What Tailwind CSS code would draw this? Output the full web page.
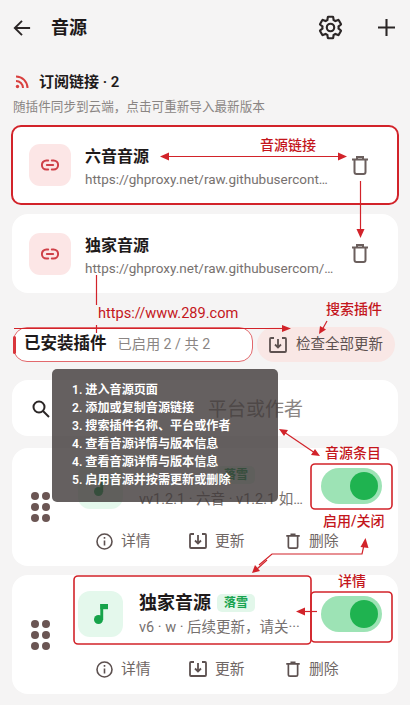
<!DOCTYPE html>
<html lang="zh">
<head>
<meta charset="utf-8">
<script src="https://cdn.jsdelivr.net/npm/@tailwindcss/browser@4"></script>
</head>
<body>
<div class="relative w-[410px] h-[705px] overflow-hidden bg-[#f5f4f4] font-['Roboto','Noto_Sans_CJK_SC',sans-serif] text-[#1e1a1a]">

  <header class="flex items-center h-[55px] pl-[13px] pr-[15px]">
    <svg class="w-[18px] h-[18px]" viewBox="0 0 20 20" fill="none" stroke="#2b2626" stroke-width="2.100"><path d="M19 10H2M10 2l-8 8 8 8"/></svg>
    <h1 class="ml-[20px] text-[18px] font-semibold leading-none">音源</h1>
    <svg class="ml-auto w-[27px] h-[27px]" viewBox="0 0 24 24" fill="none" stroke="#2b2626" stroke-width="1.900"><path d="M19.14 12.94c.04-.3.06-.61.06-.94 0-.32-.02-.64-.07-.94l2.03-1.58c.18-.14.23-.41.12-.61l-1.92-3.32c-.12-.22-.37-.29-.59-.22l-2.39.96c-.5-.38-1.03-.7-1.62-.94l-.36-2.54c-.04-.24-.24-.41-.48-.41h-3.84c-.24 0-.43.17-.47.41l-.36 2.54c-.59.24-1.13.57-1.62.94l-2.39-.96c-.22-.08-.47 0-.59.22L2.74 8.87c-.12.21-.08.47.12.61l2.03 1.58c-.05.3-.09.63-.09.94s.02.64.07.94l-2.03 1.58c-.18.14-.23.41-.12.61l1.92 3.32c.12.22.37.29.59.22l2.39-.96c.5.38 1.03.7 1.62.94l.36 2.54c.05.24.24.41.48.41h3.84c.24 0 .44-.17.47-.41l.36-2.54c.59-.24 1.13-.56 1.62-.94l2.39.96c.22.08.47 0 .59-.22l1.92-3.32c.12-.22.07-.47-.12-.61l-2.01-1.58z"/><circle cx="12" cy="12" r="3.300"/></svg>
    <svg class="ml-[34px] w-[17px] h-[17px]" viewBox="0 0 18 18" fill="none" stroke="#2b2626" stroke-width="2.200"><path d="M9 0v18M0 9h18"/></svg>
  </header>

  <section class="mt-[15px] pl-[15px] flex items-center h-[24px]">
    <svg class="w-[14px] h-[14px]" viewBox="0 0 14 14" fill="none" stroke="#d9403f" stroke-width="2"><path d="M1 6a7 7 0 0 1 7 7M1 1.500A11.500 11.500 0 0 1 12.500 13"/><circle cx="2.500" cy="11.500" r="1.700" fill="#d9403f" stroke="none"/></svg>
    <h2 class="ml-[10px] text-[15px] font-semibold leading-none">订阅链接 · 2</h2>
  </section>
  <p class="mt-[4px] ml-[13px] text-[12.600px] leading-[18px] text-[#8a8583]">随插件同步到云端，点击可重新导入最新版本</p>

  <div class="mt-[9px] mx-[11px] h-[80px] flex items-center pl-[16px] pr-[29px] bg-white rounded-[10px] border-2 border-[#d2232a]">
    <div class="w-[42px] h-[42px] shrink-0 rounded-[11px] bg-[#fce6e6] flex items-center justify-center">
      <svg class="w-[18px] h-[18px]" viewBox="0 0 20 20" fill="none" stroke="#cf4048" stroke-width="2.200" stroke-linecap="round"><path d="M8 5H6a5 5 0 0 0 0 10h2M12 5h2a5 5 0 0 1 0 10h-2M6.500 10h7"/></svg>
    </div>
    <div class="ml-[14px] w-[245px] min-w-0 pt-[3px]">
      <div class="text-[16px] font-semibold leading-[22px]">六音音源</div>
      <div class="mt-[2px] text-[13.500px] leading-[18px] text-[#77716f] whitespace-nowrap overflow-hidden">https://ghproxy.net/raw.githubusercont…</div>
    </div>
    <svg class="ml-auto w-[16px] h-[19px]" viewBox="0 0 16 19" fill="none" stroke="#6b5f5d" stroke-width="2"><path d="M0 3.500h16M5 3.500V1h6v2.500M2.500 3.500V16a2 2 0 0 0 2 2h7a2 2 0 0 0 2-2V3.500"/></svg>
  </div>

  <div class="mt-[9px] mx-[12px] h-[79px] flex items-center pl-[17px] pr-[30px] bg-white rounded-[16px]">
    <div class="w-[42px] h-[42px] shrink-0 rounded-[11px] bg-[#fce6e6] flex items-center justify-center">
      <svg class="w-[18px] h-[18px]" viewBox="0 0 20 20" fill="none" stroke="#cf4048" stroke-width="2.200" stroke-linecap="round"><path d="M8 5H6a5 5 0 0 0 0 10h2M12 5h2a5 5 0 0 1 0 10h-2M6.500 10h7"/></svg>
    </div>
    <div class="ml-[14px] w-[252px] min-w-0 pt-[5px]">
      <div class="text-[16px] font-semibold leading-[22px]">独家音源</div>
      <div class="mt-[2px] text-[13.500px] leading-[18px] text-[#77716f] whitespace-nowrap overflow-hidden">https://ghproxy.net/raw.githubusercom/…</div>
    </div>
    <svg class="ml-auto w-[16px] h-[19px]" viewBox="0 0 16 19" fill="none" stroke="#6b5f5d" stroke-width="2"><path d="M0 3.500h16M5 3.500V1h6v2.500M2.500 3.500V16a2 2 0 0 0 2 2h7a2 2 0 0 0 2-2V3.500"/></svg>
  </div>

  <div class="mt-[34px] ml-[13px] mr-[15px] flex gap-[4px] h-[35px]">
    <div class="relative w-[240px] flex items-center pl-[10px] bg-white rounded-[14px] border border-[#e2686c]">
      <span class="absolute left-[-1px] top-[8px] w-[3px] h-[18px] bg-[#d9363c] rounded-[2px]"></span>
      <span class="text-[16.500px] font-semibold">已安装插件</span>
      <span class="ml-[11px] text-[14.200px] text-[#8a8583]">已启用 2 / 共 2</span>
    </div>
    <div class="flex-1 flex items-center pl-[12px] bg-[#f9e7e5] rounded-[18px]">
      <svg class="w-[18px] h-[16px]" viewBox="0 0 18 16" fill="none" stroke="#5d5150" stroke-width="1.800"><path d="M5 1H2a1 1 0 0 0-1 1v12a1 1 0 0 0 1 1h14a1 1 0 0 0 1-1V2a1 1 0 0 0-1-1h-3M9 2v8M6 7.500l3 3 3-3"/></svg>
      <span class="ml-[9px] text-[14.500px] text-[#5d5150]">检查全部更新</span>
    </div>
  </div>

  <div class="mt-[18px] mx-[12px] h-[56px] flex items-center pl-[20px] bg-white rounded-[16px]">
    <svg class="w-[18px] h-[18px] mt-[1px]" viewBox="0 0 18 18" fill="none" stroke="#2b2626" stroke-width="2"><circle cx="7" cy="7" r="5.500"/><path d="M11 11l6 6"/></svg>
    <span class="ml-[158px] mt-[5px] text-[19px] text-[#8a8583]">平台或作者</span>
  </div>

  <div class="mt-[12px] mx-[12px] h-[118px] bg-white rounded-[16px] flex items-center pl-[19px]">
    <div class="grid grid-cols-2 gap-[3px] shrink-0">
      <i class="w-[8px] h-[8px] rounded-full bg-[#6b5654]"></i><i class="w-[8px] h-[8px] rounded-full bg-[#6b5654]"></i><i class="w-[8px] h-[8px] rounded-full bg-[#6b5654]"></i><i class="w-[8px] h-[8px] rounded-full bg-[#6b5654]"></i><i class="w-[8px] h-[8px] rounded-full bg-[#6b5654]"></i><i class="w-[8px] h-[8px] rounded-full bg-[#6b5654]"></i>
    </div>
    <div class="ml-[28px] flex-1 min-w-0 self-start pt-[14px]">
      <div class="flex items-center">
        <div class="w-[45px] h-[46px] shrink-0 rounded-[12px] bg-[#e4f8ec] flex items-center justify-center">
          <svg class="w-[14px] h-[20px]" viewBox="0 0 14 20" fill="#16a34a"><circle cx="4.500" cy="15.500" r="4.500"/><rect x="6.300" width="2.900" height="16"/><path d="M6.300 0H14v5.200H6.300z"/></svg>
        </div>
        <div class="ml-[16px] w-[170px] min-w-0">
          <div class="flex items-center h-[22px] mt-[2px]"><span class="w-[71px]"></span><span class="ml-[7px] w-[38px] h-[18px] rounded-[5px] bg-[#e2f7ea] text-[#18a34f] text-[12px] font-semibold flex items-center justify-center">落雪</span></div>
          <div class="mt-[4px] text-[14.500px] leading-[20px] text-[#77716f] whitespace-nowrap overflow-hidden">vv1.2.1 · 六音 · v1.2.1 如…</div>
        </div>
        <div class="ml-[12px] relative w-[61px] h-[36px] shrink-0 rounded-full bg-[#9de3b5]">
          <span class="absolute right-[4px] top-[4px] w-[28px] h-[28px] rounded-full bg-[#1fb350]"></span>
        </div>
      </div>
      <div class="flex items-center mt-[16px] h-[30px] ml-[18px] text-[14.800px] text-[#6f6664]">
        <div class="flex items-center w-[93px]">
          <svg class="w-[17px] h-[17px]" viewBox="0 0 17 17" fill="none" stroke="#5d5150" stroke-width="1.600"><circle cx="8.500" cy="8.500" r="7.500"/><path d="M8.500 7.500v5M8.500 4v1.800"/></svg>
          <span class="ml-[8px]">详情</span>
        </div>
        <div class="flex items-center w-[97px]">
          <svg class="w-[18px] h-[16px]" viewBox="0 0 18 16" fill="none" stroke="#5d5150" stroke-width="1.800"><path d="M5 1H2a1 1 0 0 0-1 1v12a1 1 0 0 0 1 1h14a1 1 0 0 0 1-1V2a1 1 0 0 0-1-1h-3M9 2v8M6 7.500l3 3 3-3"/></svg>
          <span class="ml-[8px]">更新</span>
        </div>
        <div class="flex items-center">
          <svg class="w-[14px] h-[16px]" viewBox="0 0 16 19" fill="none" stroke="#5d5150" stroke-width="2"><path d="M0 3.500h16M5 1.500h6M2.500 3.500V16a2 2 0 0 0 2 2h7a2 2 0 0 0 2-2V3.500"/></svg>
          <span class="ml-[9px]">删除</span>
        </div>
      </div>
    </div>
  </div>

  <div class="mt-[9px] mx-[12px] h-[119px] bg-white rounded-[16px] flex items-center pl-[19px]">
    <div class="grid grid-cols-2 gap-[3px] shrink-0">
      <i class="w-[8px] h-[8px] rounded-full bg-[#6b5654]"></i><i class="w-[8px] h-[8px] rounded-full bg-[#6b5654]"></i><i class="w-[8px] h-[8px] rounded-full bg-[#6b5654]"></i><i class="w-[8px] h-[8px] rounded-full bg-[#6b5654]"></i><i class="w-[8px] h-[8px] rounded-full bg-[#6b5654]"></i><i class="w-[8px] h-[8px] rounded-full bg-[#6b5654]"></i>
    </div>
    <div class="ml-[28px] flex-1 min-w-0 self-start pt-[15px]">
      <div class="flex items-center">
        <div class="w-[45px] h-[46px] shrink-0 rounded-[12px] bg-[#e4f8ec] flex items-center justify-center">
          <svg class="w-[14px] h-[20px]" viewBox="0 0 14 20" fill="#16a34a"><circle cx="4.500" cy="15.500" r="4.500"/><rect x="6.300" width="2.900" height="16"/><path d="M6.300 0H14v5.200H6.300z"/></svg>
        </div>
        <div class="ml-[16px] w-[170px] min-w-0">
          <div class="flex items-center h-[22px] mt-[2px]"><span class="text-[18px] font-bold leading-none">独家音源</span><span class="ml-[6px] w-[38px] h-[18px] rounded-[5px] bg-[#e2f7ea] text-[#18a34f] text-[12px] font-semibold flex items-center justify-center">落雪</span></div>
          <div class="mt-[4px] text-[14.500px] leading-[20px] text-[#77716f] whitespace-nowrap">v6 · w · 后续更新，请关···</div>
        </div>
        <div class="ml-[12px] relative w-[61px] h-[36px] shrink-0 rounded-full bg-[#9de3b5]">
          <span class="absolute right-[4px] top-[4px] w-[28px] h-[28px] rounded-full bg-[#1fb350]"></span>
        </div>
      </div>
      <div class="flex items-center mt-[16px] h-[30px] ml-[18px] text-[14.800px] text-[#6f6664]">
        <div class="flex items-center w-[93px]">
          <svg class="w-[17px] h-[17px]" viewBox="0 0 17 17" fill="none" stroke="#5d5150" stroke-width="1.600"><circle cx="8.500" cy="8.500" r="7.500"/><path d="M8.500 7.500v5M8.500 4v1.800"/></svg>
          <span class="ml-[8px]">详情</span>
        </div>
        <div class="flex items-center w-[97px]">
          <svg class="w-[18px] h-[16px]" viewBox="0 0 18 16" fill="none" stroke="#5d5150" stroke-width="1.800"><path d="M5 1H2a1 1 0 0 0-1 1v12a1 1 0 0 0 1 1h14a1 1 0 0 0 1-1V2a1 1 0 0 0-1-1h-3M9 2v8M6 7.500l3 3 3-3"/></svg>
          <span class="ml-[8px]">更新</span>
        </div>
        <div class="flex items-center">
          <svg class="w-[14px] h-[16px]" viewBox="0 0 16 19" fill="none" stroke="#5d5150" stroke-width="2"><path d="M0 3.500h16M5 1.500h6M2.500 3.500V16a2 2 0 0 0 2 2h7a2 2 0 0 0 2-2V3.500"/></svg>
          <span class="ml-[9px]">删除</span>
        </div>
      </div>
    </div>
  </div>

  <!-- tutorial overlay -->
  <div class="absolute left-[52px] top-[369px] w-[226px] h-[133px] rounded-[5px] bg-[#3f3838]/80 pl-[20px] pt-[12px] text-white text-[12.100px] font-semibold leading-[18px] whitespace-nowrap">
    <div>1. 进入音源页面</div>
    <div>2. 添加或复制音源链接</div>
    <div>3. 搜索插件名称、平台或作者</div>
    <div>4. 查看音源详情与版本信息</div>
    <div>4. 查看音源详情与版本信息</div>
    <div>5. 启用音源并按需更新或删除</div>
  </div>

  <!-- annotation boxes and arrows -->
  <svg class="absolute left-0 top-0 w-[410px] h-[705px] pointer-events-none" viewBox="0 0 410 705" fill="none" stroke="#d2232a" stroke-width="1.200">
    <path d="M168 156.500H340"/>
    <path d="M160 156.500l9-4v8zM347 156.500l-9-4v8z" fill="#d2232a" stroke="none"/>
    <path d="M360.500 181V230"/>
    <path d="M360.500 238l-4-9h8z" fill="#d2232a" stroke="none"/>
    <path d="M96.500 275V305M96.500 325V333"/>
    <path d="M14 328.500H283"/>
    <path d="M291 328.500l-9-3.500v7z" fill="#d2232a" stroke="none"/>
    <path d="M327 321L322 330"/>
    <path d="M319 334l1-8 6 3.500z" fill="#d2232a" stroke="none"/>
    <path d="M284 432L315 453"/>
    <path d="M279 429l9 1-4 6zM320 456l-9-1 4-6z" fill="#d2232a" stroke="none"/>
    <rect x="311" y="464" width="81" height="45" rx="4" stroke-width="1.600"/>
    <path d="M259 565L272 554H362L364 545"/>
    <path d="M365.500 538l3 10-8-1z" fill="#d2232a" stroke="none"/>
    <path d="M267 560L257 569"/>
    <path d="M252 573l3-8 5 6z" fill="#d2232a" stroke="none"/>
    <rect x="74" y="576" width="237" height="68" rx="4" stroke-width="1.600"/>
    <rect x="311" y="592" width="81" height="50" rx="4" stroke-width="1.600"/>
    <path d="M317 611.500H302"/>
    <path d="M296 611.500l9-4v8z" fill="#d2232a" stroke="none"/>
  </svg>

  <span class="absolute left-[260px] top-[135px] text-[14px] font-medium leading-[20px] text-[#c4161c]">音源链接</span>
  <span class="absolute left-[98px] top-[303px] text-[14.600px] leading-[20px] text-[#c4161c]">https://www.289.com</span>
  <span class="absolute left-[326px] top-[299px] text-[14px] font-medium leading-[20px] text-[#c4161c]">搜索插件</span>
  <span class="absolute left-[325px] top-[443px] text-[14px] font-medium leading-[20px] text-[#c4161c]">音源条目</span>
  <span class="absolute left-[323px] top-[511px] text-[14px] font-medium leading-[20px] text-[#c4161c]">启用/关闭</span>
  <span class="absolute left-[338px] top-[571px] text-[14px] font-medium leading-[20px] text-[#c4161c]">详情</span>
</div>
</body>
</html>
